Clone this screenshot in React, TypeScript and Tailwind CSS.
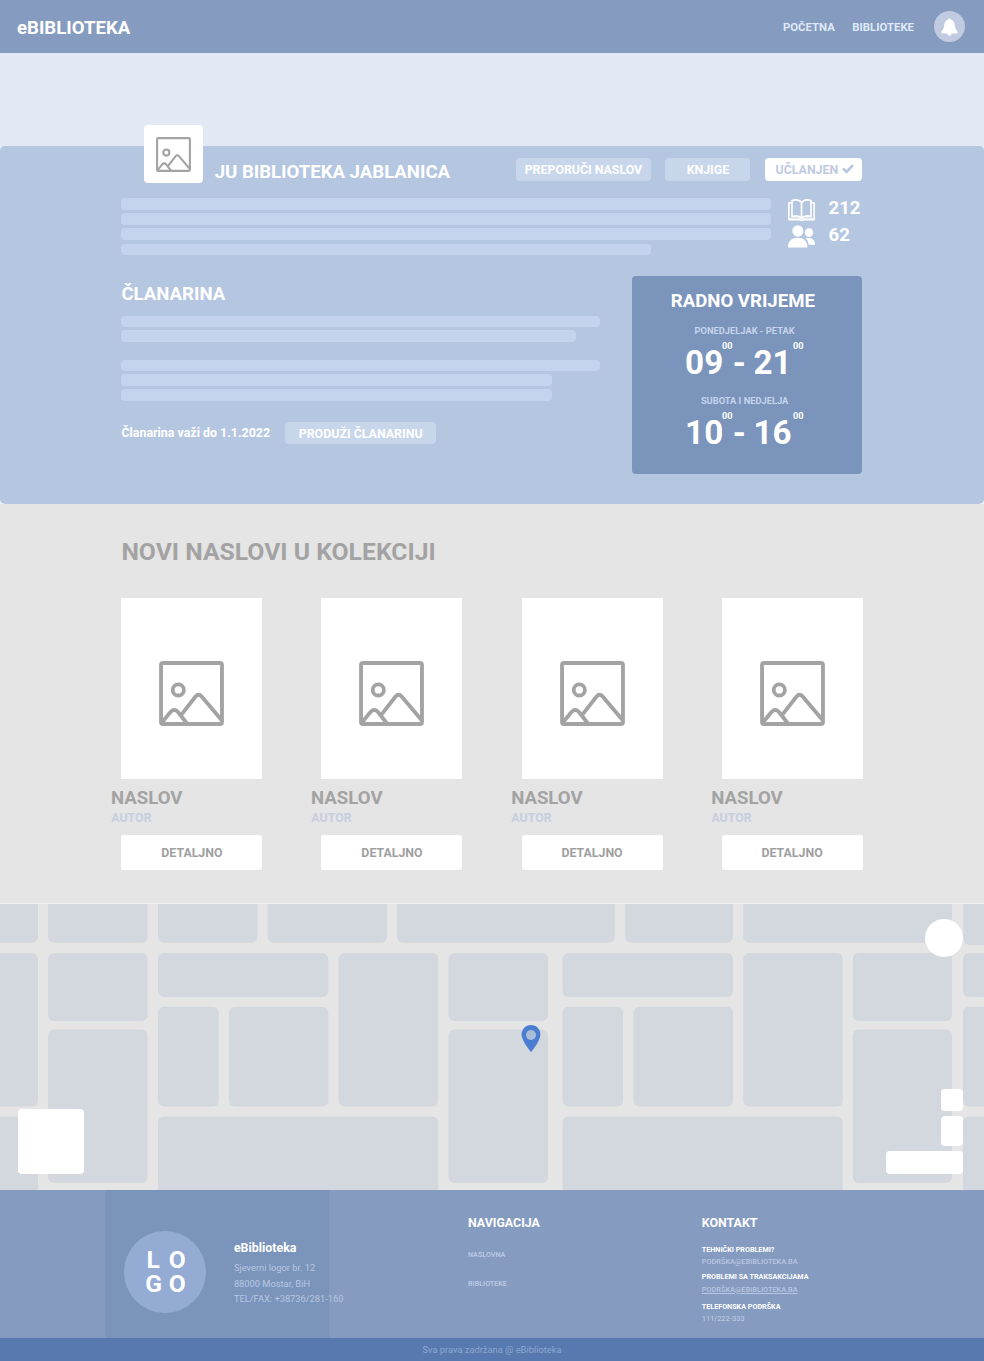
import React from "react";

const cards = [0, 1, 2, 3];

const blocks: [number, number, number, number][] = [
  [-20, -20, 38, 38.7],
  [48, -20, 147.6, 38.7],
  [158, -20, 257.5, 38.7],
  [267.7, -20, 387, 38.7],
  [397, -20, 614.8, 38.7],
  [625.3, -20, 733, 38.7],
  [743.3, -20, 952, 38.7],
  [963.3, -20, 1000, 41],
  [-20, 49, 38, 202.6],
  [-20, 212.6, 38, 320],
  [48, 49, 147.6, 117],
  [48, 125.4, 147.6, 279],
  [158, 49, 328.3, 93],
  [158, 102.8, 218.8, 202.6],
  [229, 102.8, 328.3, 202.6],
  [338.5, 49, 438.2, 202.6],
  [158, 212.6, 438.2, 320],
  [448.5, 49, 548, 117],
  [448.5, 125.4, 548, 279],
  [562.5, 49, 733, 93],
  [562.5, 102.8, 623, 202.6],
  [633.4, 102.8, 733, 202.6],
  [743.3, 49, 842.8, 202.6],
  [562.5, 212.6, 842.8, 320],
  [852.8, 49, 952, 117],
  [852.8, 125.4, 952, 279],
  [963, 49, 1000, 93],
  [963, 102.8, 1000, 202.6],
  [963, 212.6, 1000, 320],
];

function Picture({ className, stroke }: { className: string; stroke: number }) {
  return (
    <svg viewBox="0 0 64 64" className={className} fill="none" stroke="#a3a3a3" strokeWidth={stroke} strokeLinejoin="round">
      <rect x="2" y="2" width="60" height="60" rx="2" />
      <circle cx="19" cy="28.5" r="5.5" />
      <path d="M2.5 61 L11.5 50 Q15 46.500 18.500 50 L27.500 61.500" />
      <path d="M21.500 53.500 L36 35 Q39 31.500 42 35 L62 58.500" />
    </svg>
  );
}

function Hours({ label, from, to }: { label: string; from: string; to: string }) {
  return (
    <div className="flex h-[69.7px] flex-col items-center">
      <p className="text-[9.3px] leading-[10px] font-bold whitespace-nowrap text-[#c5d5ef]">{label}</p>
      <div className="mt-[10px] flex w-[119px] items-start text-[33.2px] leading-[34px] font-bold text-white">
        <span className="w-[37px]">{from}</span>
        <span className="mt-[-5px] w-[10.700px] text-[9.2px] leading-[10px]">00</span>
        <span className="w-[20.600px]">-</span>
        <span className="w-[39.700px]">{to}</span>
        <span className="mt-[-5px] text-[9.2px] leading-[10px]">00</span>
      </div>
    </div>
  );
}

export default function App() {
  return (
    <div className="flex h-[1361px] w-[984px] flex-col overflow-hidden bg-[#e5e5e5] font-['Roboto',sans-serif]">
      <header className="flex h-[53px] shrink-0 items-center bg-[#859bbf] pr-[19px] pl-[17px] font-bold">
        <h1 className="mt-[3px] text-[18.6px] leading-5 text-white">eBIBLIOTEKA</h1>
        <nav className="mt-px ml-auto flex gap-[17.500px] text-[11.35px] leading-4 text-[#dfe9fa]">
          <a>POČETNA</a>
          <a>BIBLIOTEKE</a>
        </nav>
        <span className="ml-5 flex size-[31px] items-center justify-center rounded-full bg-[#c0cae0]">
          <svg viewBox="0 0 17 18" className="h-[18px] w-[17px]" fill="#fff">
            <path d="M8.500 0.300C9.300 0.300 9.800 0.900 10 1.500C12.500 2.500 13.700 4.900 13.900 7.600C14.100 10.200 14.900 11.600 16.300 13.200C17 14.200 16.700 15.500 15.500 15.500H10.600C10.400 17 9.600 17.700 8.500 17.700S6.600 17 6.400 15.500H1.500C0.300 15.500 0 14.200 0.700 13.200C2.100 11.600 2.900 10.200 3.100 7.600C3.300 4.900 4.500 2.500 7 1.500C7.200 0.900 7.700 0.300 8.500 0.300Z" />
          </svg>
        </span>
      </header>

      <div className="shrink-0 bg-[linear-gradient(#e2e9f5_100px,#eef0f5_100px)]">
        <div className="h-[93px]" />
        <section className="h-[358px] rounded-[5px] bg-[#b5c6e1] pl-[121.4px] font-bold text-white">
          <div className="flex h-[52px] w-[741px]">
            <div className="mt-[-21px] ml-[22.6px] flex h-[58.400px] w-[59.400px] shrink-0 items-center justify-center rounded bg-white">
              <Picture className="size-[35px]" stroke={3.8} />
            </div>
            <h2 className="mt-4 ml-[11.3px] text-[18.58px] leading-5 whitespace-nowrap">JU BIBLIOTEKA JABLANICA</h2>
            <div className="mt-3 ml-auto flex h-[23px] gap-[14.500px] text-[12.35px] whitespace-nowrap">
              <button className="w-[135px] rounded bg-[#c8d6eb] pt-px">PREPORUČI NASLOV</button>
              <button className="w-[85px] rounded bg-[#c8d6eb] pt-px">KNJIGE</button>
              <button className="flex w-[97.5px] items-center justify-center gap-[3.500px] rounded bg-white pt-[2px] pl-[2px] text-[#bfc9e2]">
                UČLANJEN
                <svg viewBox="0 0 12 10" className="mt-[-3px] h-[10px] w-3" fill="none" stroke="#b5c6e1" strokeWidth="2.6">
                  <path d="M1 4.500 L4.500 8 L11 1.200" />
                </svg>
              </button>
            </div>
          </div>

          <div className="flex h-[78px] w-[741px]">
            <div className="flex w-[650px] flex-col gap-[3.400px] pt-[0.300px]">
              <div className="h-[11.700px] rounded bg-[#c4d4ed]" />
              <div className="h-[11.700px] rounded bg-[#c4d4ed]" />
              <div className="h-[11.700px] rounded bg-[#c4d4ed]" />
              <div className="h-[11.700px] w-[529.500px] rounded bg-[#c4d4ed]" />
            </div>
            <div className="ml-[16.600px] flex flex-col text-[18.600px] leading-[26.500px]">
              <div className="flex h-[26.500px] items-start">
                <svg viewBox="0 0 27 22" className="mt-px h-[22px] w-[27px]" fill="none" stroke="#fff" strokeWidth="1.6" strokeLinejoin="round">
                  <path d="M13.500 3.500C11.500 0.900 7.500 0.500 4 1.500V17.500C7.500 16.500 11.500 17 13.500 19.200C15.500 17 19.500 16.500 23 17.500V1.500C19.500 0.500 15.500 0.900 13.500 3.500ZM13.500 3.500V18.500" />
                  <path d="M4 3.800H0.900V20.600H11.200Q13.500 22 15.800 20.600H26.100V3.800H23" />
                  <path d="M2 19.600C6 18.500 10 18.500 13.500 20.300C17 18.500 21 18.500 25 19.600" strokeWidth="1" />
                </svg>
                <span className="mt-[-3px] ml-[13.500px]">212</span>
              </div>
              <div className="flex h-[26.500px] items-start">
                <svg viewBox="0 0 27 23" className="mt-[0.500px] h-[23px] w-[27px]" fill="#fff">
                  <ellipse cx="9.800" cy="6" rx="5.500" ry="5.700" />
                  <path d="M0 22.500C0 16 4 12.800 9.700 12.800S19.400 16 19.400 22.500Z" />
                  <ellipse cx="21" cy="7.600" rx="4.200" ry="4.400" />
                  <path d="M17.800 13.600C23.500 11.800 27 15 27.200 19.800H20.600C20.300 17 19.400 15 17.800 13.600Z" />
                </svg>
                <span className="mt-[-3px] ml-[13.500px]">62</span>
              </div>
            </div>
          </div>

          <div className="flex w-[741px]">
            <div className="w-[511px] pt-2">
              <h2 className="text-[18.600px] leading-5">ČLANARINA</h2>
              <div className="mt-[11.500px] flex flex-col gap-[3.300px]">
                <div className="h-[11.500px] w-[478.500px] rounded bg-[#c4d4ed]" />
                <div className="h-[11.500px] w-[454.500px] rounded bg-[#c4d4ed]" />
                <div className="mt-[14.500px] h-[11.500px] w-[478.500px] rounded bg-[#c4d4ed]" />
                <div className="h-[11.500px] w-[430.500px] rounded bg-[#c4d4ed]" />
                <div className="h-[11.500px] w-[430.500px] rounded bg-[#c4d4ed]" />
              </div>
              <div className="mt-[21px] flex h-[22.500px] items-center text-[12.420px] whitespace-nowrap">
                <span className="w-[164px] pt-px">Članarina važi do 1.1.2022</span>
                <button className="h-[22.500px] w-[150.500px] rounded bg-[#c8d6eb] pt-[2.500px]">PRODUŽI ČLANARINU</button>
              </div>
            </div>
            <aside className="flex h-[198px] w-[230px] flex-col items-center rounded bg-[#7b94bb] pt-[15px]">
              <h2 className="mr-[9px] text-[18.600px] leading-5">RADNO VRIJEME</h2>
              <div className="mt-[15px] mr-[5.600px]">
                <Hours label="PONEDJELJAK - PETAK" from="09" to="21" />
                <Hours label="SUBOTA I NEDJELJA" from="10" to="16" />
              </div>
            </aside>
          </div>
        </section>
      </div>

      <section className="h-[399px] shrink-0 px-[121.400px] pt-[34.500px] font-bold text-[#a3a3a3]">
        <h2 className="text-[24.750px] leading-[26px]">NOVI NASLOVI U KOLEKCIJI</h2>
        <div className="mt-[33.500px] flex justify-between">
          {cards.map((i) => (
            <article key={i} className="w-[141px]">
              <div className="flex h-[181.400px] items-center justify-center rounded-[1px] bg-white pt-[9px]">
                <Picture className="size-[65px]" stroke={3.8} />
              </div>
              <h3 className="mt-[9px] ml-[-10.400px] text-[18.600px] leading-5">NASLOV</h3>
              <p className="mt-[2.500px] ml-[-10.200px] text-[12.400px] leading-[14px] text-[#c7cee0]">AUTOR</p>
              <button className="mt-[10.500px] h-[34.500px] w-full rounded-[3px] bg-white pt-px text-[12.350px] text-[#9f9f9f]">DETALJNO</button>
            </article>
          ))}
        </div>
      </section>

      <section className="relative h-[287px] shrink-0 border-t border-[#efefef]">
        <svg viewBox="0 0 984 286" className="h-[286px] w-[984px]" fill="#d3d7de">
          {blocks.map(([x1, y1, x2, y2], i) => (
            <rect key={i} x={x1} y={y1} width={x2 - x1} height={y2 - y1} rx="6" />
          ))}
        </svg>
        <svg viewBox="0 0 20 28" className="absolute top-[121px] left-[521.300px] h-[28px] w-5">
          <path d="M10 0C4.700 0 0.600 4.200 0.600 9.400C0.600 16 10 27 10 27S19.400 16 19.400 9.400C19.400 4.200 15.300 0 10 0Z" fill="#4b7ed1" />
          <circle cx="10" cy="10" r="5" fill="#a9bcd8" />
        </svg>
        <div className="absolute top-[15.400px] left-[925px] size-[38px] rounded-full bg-white" />
        <div className="absolute top-[204.700px] left-[18px] h-[65.300px] w-[66px] rounded bg-white" />
        <div className="absolute top-[185px] left-[941px] h-[21.700px] w-[22px] rounded bg-white" />
        <div className="absolute top-[212px] left-[941px] h-[30px] w-[22px] rounded bg-white" />
        <div className="absolute top-[247.300px] left-[886px] h-[22.700px] w-[77px] rounded bg-white" />
      </section>

      <footer className="flex h-[148.400px] shrink-0 bg-[#859bbf] pl-[105.400px] text-[#b8c7e2]">
        <div className="flex w-[224px] bg-[#7b94bb] pl-[19px]">
          <div className="mt-[41px] grid size-[82px] shrink-0 grid-cols-[23.500px_23.500px] content-center justify-center rounded-full bg-[#94abd3] text-center text-[24.600px] leading-6 font-bold text-white">
            <span className="-ml-px">L</span>
            <span>O</span>
            <span>G</span>
            <span>O</span>
          </div>
          <div className="mt-[50px] ml-[27.500px] text-[9.300px] leading-[15.500px] whitespace-nowrap">
            <h3 className="mb-1 text-[12.400px] leading-4 font-bold text-white">eBiblioteka</h3>
            <p>Sjeverni logor br. 12</p>
            <p>88000 Mostar, BiH</p>
            <p>TEL/FAX: +38736/281-160</p>
          </div>
        </div>
        <div className="ml-[138.600px] w-[233.800px] pt-[25px] text-[7.150px] leading-[10px] font-bold">
          <h3 className="text-[12.400px] leading-4 text-white">NAVIGACIJA</h3>
          <p className="mt-[19px]">NASLOVNA</p>
          <p className="mt-[19px]">BIBLIOTEKE</p>
        </div>
        <div className="pt-[25px] text-[7.200px] leading-[10px] font-bold">
          <h3 className="text-[12.400px] leading-4 text-white">KONTAKT</h3>
          <p className="mt-[13.500px] text-white">TEHNIČKI PROBLEMI?</p>
          <p className="mt-[2px] text-[7.350px] font-medium">PODRŠKA@EBIBLIOTEKA.BA</p>
          <p className="mt-[5.500px] text-white">PROBLEMI SA TRAKSAKCIJAMA</p>
          <p className="mt-[2.500px] text-[7.350px] font-medium underline">PODRŠKA@EBIBLIOTEKA.BA</p>
          <p className="mt-[7.700px] text-white">TELEFONSKA PODRŠKA</p>
          <p className="mt-[2px] text-[7.350px] font-medium">111/222-333</p>
        </div>
      </footer>
      <div className="flex h-[22.600px] shrink-0 items-center justify-center bg-[#5879b0] text-[9.300px] text-[#8ea6d0]">Sva prava zadržana @ eBiblioteka</div>
    </div>
  );
}
